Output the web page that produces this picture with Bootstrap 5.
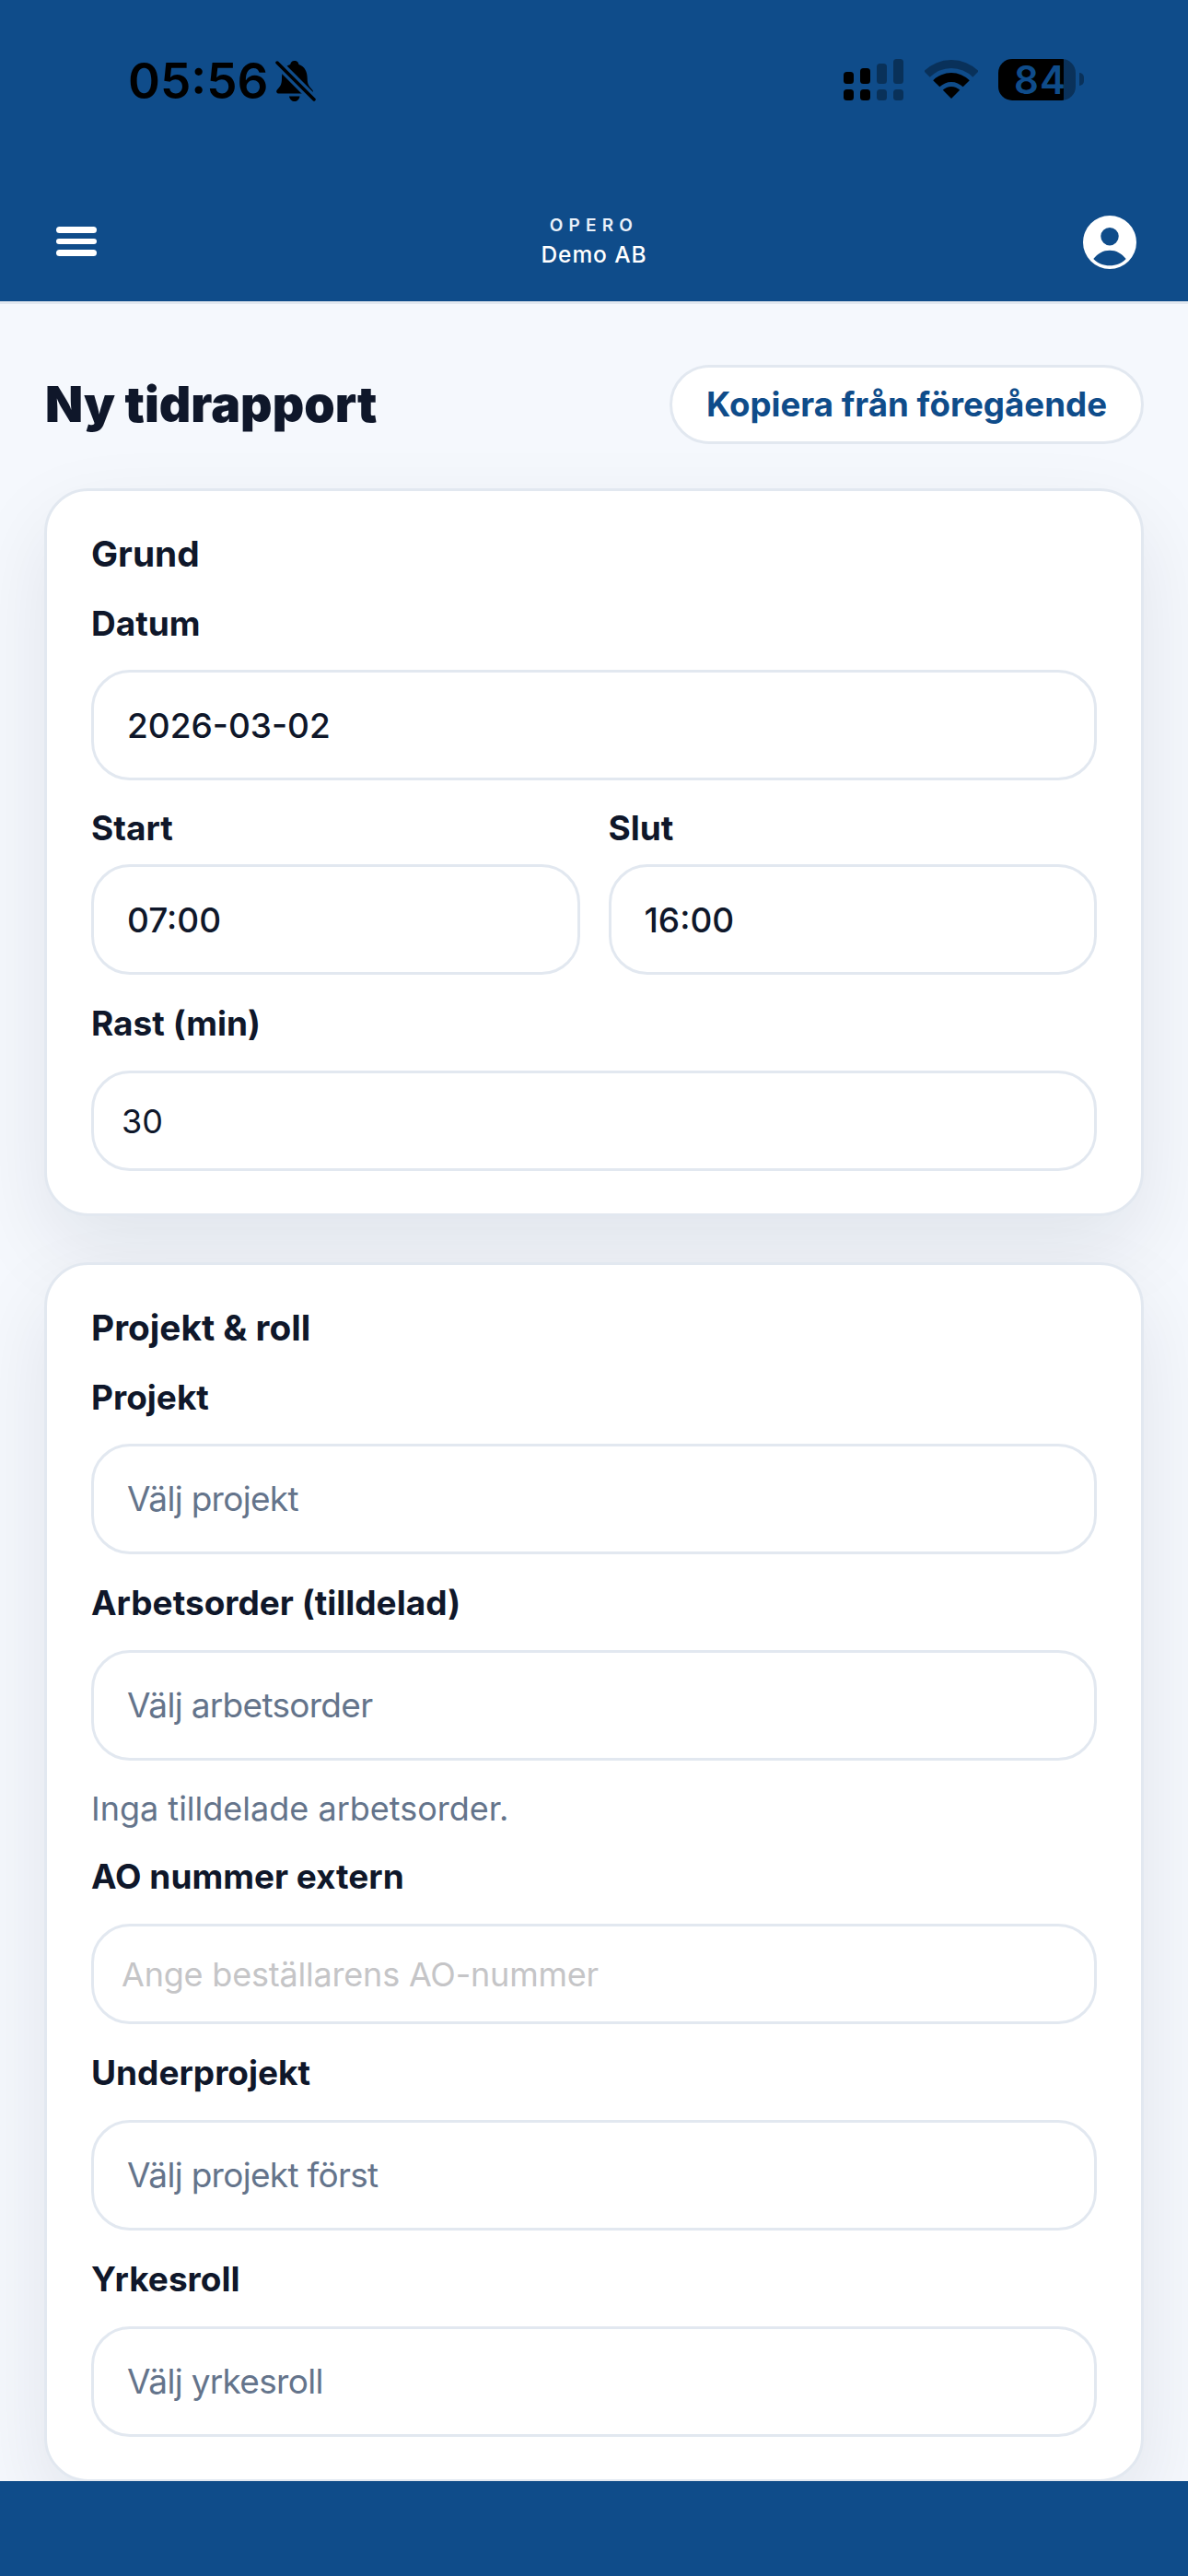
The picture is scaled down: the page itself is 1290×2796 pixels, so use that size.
<!doctype html>
<html lang="sv">
<head>
<meta charset="utf-8">
<title>Ny tidrapport</title>
<link href="https://cdn.jsdelivr.net/npm/bootstrap@5.3.0/dist/css/bootstrap.min.css" rel="stylesheet">
<style>
html,body{height:2796px;overflow:hidden}
body{font-family:Inter,"Liberation Sans",sans-serif;color:#0f172a;background:#f5f8fd;display:flex;flex-direction:column}
.topband{background:#0f4c8a;height:330px;border-bottom:3px solid #e2e8f0;flex:none;display:flex;flex-direction:column}
.statusline{height:174px;padding:0 113px 0 139px;display:flex;justify-content:space-between;flex:none}
.clock-group{display:flex;align-items:flex-start;padding-top:59px;gap:8px}
.clock{font-size:53px;font-weight:600;line-height:58px;color:#000}
.bell-ic{margin-top:6px}
.status-icons{display:flex;align-items:flex-start;padding-top:64px}
.sig{margin-right:23px}
.wifi-ic{margin-right:22px;margin-top:1px}
.batt{width:84px;height:45px;border-radius:15px;background:linear-gradient(to right,#000 84.5%,rgba(0,0,0,.35) 84.5%);color:#0f4c8a;font-size:42px;font-weight:600;line-height:45px;padding-left:17px;letter-spacing:1px}
.batt-nub{width:5px;height:14px;margin:15px 0 0 4px;border-radius:0 6px 6px 0;background:rgba(0,0,0,.35)}
.appbar{flex:1;padding:20px 56px 0 61px;display:flex;align-items:center;justify-content:space-between}
.burger{width:44px;display:flex;flex-direction:column;gap:6px;margin-top:3px}
.burger span{height:6.5px;border-radius:4px;background:#fff;display:block}
.brandbox{text-align:center;color:#fff;margin-top:3px;margin-left:9px}
.brand-top{font-size:19px;letter-spacing:6.2px;line-height:28px;font-weight:600;color:#eaf1fa}
.brand-sub{font-size:24.500px;letter-spacing:.9px;line-height:34px;font-weight:500}
.avatar-ic{display:block;margin-top:5px}
.mainarea{flex:1;overflow:hidden;padding:66px 48px 0;min-height:0}
.page-title{font-size:53.500px;font-weight:900;line-height:60px;margin:0 0 0 1px;color:#0f172a}
.copybtn{height:86px;padding:0 37px;border:3px solid #e2e8f0;background:#fff;color:#0f4c8a;font-size:36.700px;font-weight:700;line-height:1;border-radius:43px}
.formcard{border:3px solid #e2e8f0;border-radius:48px;background:#fff;padding:41px 48px 46px;box-shadow:0 36px 90px rgba(15,23,42,.085);margin-top:48px}
.formcard+.formcard{margin-top:50px}
.sect-title{font-size:38.800px;font-weight:700;line-height:54px;margin:0}
.fld-label{display:block;font-size:37px;font-weight:650;line-height:48px;margin:29px 0 27px}
.sect-title+.fld-label{margin:25px 0 26px}
.fld-label.tight{margin:28px 0 15px}
.bigfield.form-control,.bigfield.form-select{height:120px;border:3px solid #e2e8f0;border-radius:42px;padding:0 36px;font-size:37px;color:#0f172a;background-image:none;background-color:#fff;font-family:Inter,"Liberation Sans",sans-serif;box-shadow:none}
.bigfield.form-select{color:#64748b;letter-spacing:-.7px}
.bigfield.valfield{font-weight:500}
.bigfield.slim{height:109px;padding:0 30px;font-size:36px}
.bigfield.slim::placeholder{color:#c5c5c7;opacity:1;letter-spacing:-.2px}
.hinttext{font-size:36px;line-height:48px;color:#64748b;margin:28px 0 -3px}
.pair{display:flex;gap:31px}
.pair>div{flex:1 1 0;min-width:0}
.bottomband{height:103px;background:#0f4c8a;flex:none;position:relative}
</style>
</head>
<body>
<header class="topband">
  <div class="statusline">
    <div class="clock-group">
      <span class="clock">05:56</span>
      <svg class="bell-ic" width="44" height="46" viewBox="0 0 44 46" aria-hidden="true">
        <path d="M20.7 1c-3 0-4 2-4.5 4C9 7 7 13 7 20c0 7-2 9-5.500 13-1 1.500 0 3.500 2 3.500h35c2 0 3-2 2-3.500C37 29 34.700 27 34.700 20 34.700 13 32 7 25.500 5 25 3 24 1 20.700 1z"/>
        <path d="M15 39.500h11.500c-.5 3.500-3 5.500-5.700 5.500s-5.300-2-5.800-5.500z"/>
        <path d="M2 3l40 40" stroke="#0f4c8a" stroke-width="10" fill="none"/>
        <path d="M2 3l40 40" stroke="#000" stroke-width="3.500" stroke-linecap="round" fill="none"/>
      </svg>
    </div>
    <div class="status-icons">
      <svg class="sig" width="65" height="45" viewBox="0 0 65 45" aria-hidden="true">
        <rect x="0" y="14" width="11" height="13" rx="3.500"/><rect x="0" y="33" width="11" height="12" rx="3.500"/>
        <rect x="18" y="10" width="11" height="17" rx="3.500"/><rect x="18" y="33" width="11" height="12" rx="3.500"/>
        <g opacity=".35"><rect x="36" y="5" width="11" height="22" rx="3.500"/><rect x="36" y="33" width="11" height="12" rx="3.500"/>
        <rect x="54" y="0" width="11" height="27" rx="3.500"/><rect x="54" y="33" width="11" height="12" rx="3.500"/></g>
      </svg>
      <svg class="wifi-ic" width="58" height="42" viewBox="0 0 58 42" aria-hidden="true">
        <path d="M29 42 19.800 32.800A13 13 0 0 1 38.200 32.800Z"/>
        <path d="M9.200 22.200A28 28 0 0 1 48.800 22.200L41.700 29.300A18 18 0 0 0 16.300 29.300Z"/>
        <path opacity=".35" d="M-.7 12.300A42 42 0 0 1 58.700 12.300L52.300 18.700A33 33 0 0 0 5.700 18.700Z"/>
      </svg>
      <div class="batt">84</div>
      <div class="batt-nub"></div>
    </div>
  </div>
  <div class="appbar">
    <div class="burger"><span></span><span></span><span></span></div>
    <div class="brandbox">
      <div class="brand-top">OPERO</div>
      <div class="brand-sub">Demo AB</div>
    </div>
    <svg class="avatar-ic" width="58" height="58" viewBox="0 0 58 58" aria-hidden="true">
      <path fill="#fff" fill-rule="evenodd" d="M29 0a29 29 0 1 1 0 58a29 29 0 1 1 0-58zM29 13a9.700 9.700 0 1 0 0 19.400a9.700 9.700 0 1 0 0-19.400zM11.300 47C16 41 22 37.700 29 37.700S42 41 46.700 47C42 52 36 54.300 29 54.300S16 52 11.300 47Z"/>
    </svg>
  </div>
</header>
<main class="mainarea">
  <div class="d-flex justify-content-between align-items-center">
    <h1 class="page-title">Ny tidrapport</h1>
    <button type="button" class="btn copybtn">Kopiera från föregående</button>
  </div>
  <section class="card formcard">
    <h2 class="sect-title">Grund</h2>
    <label class="fld-label">Datum</label>
    <input class="form-control bigfield valfield" type="text" value="2026-03-02">
    <div class="pair">
      <div><label class="fld-label tight">Start</label><input class="form-control bigfield valfield" type="text" value="07:00"></div>
      <div><label class="fld-label tight">Slut</label><input class="form-control bigfield valfield" type="text" value="16:00"></div>
    </div>
    <label class="fld-label">Rast (min)</label>
    <input class="form-control bigfield slim" type="text" value="30">
  </section>
  <section class="card formcard">
    <h2 class="sect-title">Projekt &amp; roll</h2>
    <label class="fld-label">Projekt</label>
    <select class="form-select bigfield"><option>Välj projekt</option></select>
    <label class="fld-label">Arbetsorder (tilldelad)</label>
    <select class="form-select bigfield"><option>Välj arbetsorder</option></select>
    <p class="hinttext">Inga tilldelade arbetsorder.</p>
    <label class="fld-label">AO nummer extern</label>
    <input class="form-control bigfield slim" type="text" placeholder="Ange beställarens AO-nummer">
    <label class="fld-label">Underprojekt</label>
    <select class="form-select bigfield"><option>Välj projekt först</option></select>
    <label class="fld-label">Yrkesroll</label>
    <select class="form-select bigfield"><option>Välj yrkesroll</option></select>
  </section>
</main>
<footer class="bottomband"></footer>
<script src="https://cdn.jsdelivr.net/npm/bootstrap@5.3.0/dist/js/bootstrap.bundle.min.js"></script>
</body>
</html>
